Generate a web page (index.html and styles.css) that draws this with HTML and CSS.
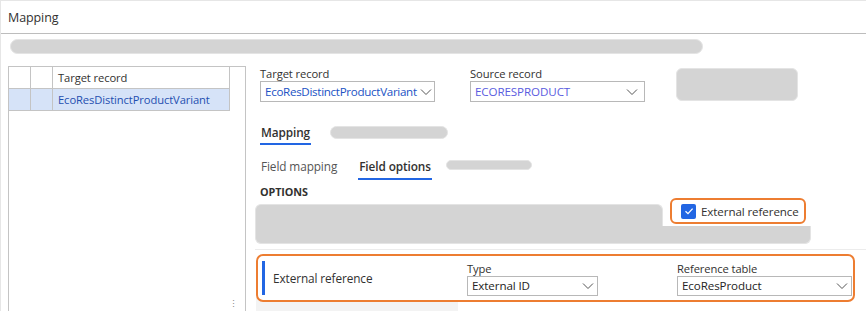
FILE: index.html
```html
<!DOCTYPE html>
<html>
<head>
<meta charset="utf-8">
<link rel="stylesheet" href="styles.css">
</head>
<body>
<div class="page">
  <div class="header">Mapping</div>
  <div class="sk sk-topbar"></div>
  <div class="main">
    <div class="left-panel">
      <div class="grid">
        <div class="grid-row head">
          <div class="c c1"></div><div class="c c2"></div><div class="c c3">Target record</div>
        </div>
        <div class="grid-row sel">
          <div class="c c1"></div><div class="c c2"></div><div class="c c3 link">EcoResDistinctProductVariant</div>
        </div>
      </div>
      <div class="grip">⋮</div>
    </div>
    <div class="right">
      <div class="fields">
        <div class="field f-target">
          <div class="lbl">Target record</div>
          <div class="combo">
            <span class="val blue tight">EcoResDistinctProductVariant</span>
            <svg class="chev" width="12" height="8" viewBox="0 0 12 8"><path d="M1 1.5 L6 6.5 L11 1.5" fill="none" stroke="#555" stroke-width="1"/></svg>
          </div>
        </div>
        <div class="field f-source">
          <div class="lbl">Source record</div>
          <div class="combo">
            <span class="val purple">ECORESPRODUCT</span>
            <svg class="chev" width="12" height="8" viewBox="0 0 12 8"><path d="M1 1.5 L6 6.5 L11 1.5" fill="none" stroke="#555" stroke-width="1"/></svg>
          </div>
        </div>
        <div class="sk sk-btn"></div>
      </div>

      <div class="tabs">
        <div class="tab active">Mapping</div>
        <div class="sk sk-tab"></div>
      </div>

      <div class="subtabs">
        <div class="subtab">Field mapping</div>
        <div class="subtab active">Field options</div>
        <div class="sk sk-subtab"></div>
      </div>

      <div class="section-title">OPTIONS</div>

      <div class="options">
        <div class="sk sk-opt1"></div>
        <div class="chk-box">
          <span class="chk"><svg width="14" height="14" viewBox="0 0 14 14"><path d="M3.5 7.2 L6 9.6 L10.6 4.6" fill="none" stroke="#fff" stroke-width="1.3"/></svg></span>
          <span class="chk-label">External reference</span>
        </div>
        <div class="sk sk-opt2"></div>
      </div>

      <div class="divider"></div>

      <div class="ext-box">
        <div class="ext-title">External reference</div>
        <div class="field f-type">
          <div class="lbl">Type</div>
          <div class="combo small">
            <span class="val">External ID</span>
            <svg class="chev" width="12" height="8" viewBox="0 0 12 8"><path d="M1 1.5 L6 6.5 L11 1.5" fill="none" stroke="#555" stroke-width="1"/></svg>
          </div>
        </div>
        <div class="field f-ref">
          <div class="lbl">Reference table</div>
          <div class="combo small">
            <span class="val">EcoResProduct</span>
            <svg class="chev" width="12" height="8" viewBox="0 0 12 8"><path d="M1 1.5 L6 6.5 L11 1.5" fill="none" stroke="#555" stroke-width="1"/></svg>
          </div>
        </div>
      </div>
      <div class="sk-under"></div>
    </div>
  </div>
</div>
</body>
</html>
```

FILE: styles.css
```css
* { box-sizing: border-box; }
html, body { margin: 0; padding: 0; background: #fff; }
body {
  font-family: "Segoe UI", "Open Sans", "Noto Sans", sans-serif;
  font-size: 11.2px;
  letter-spacing: -0.1px;
  color: #323130;
  width: 866px;
  height: 311px;
  overflow: hidden;
}
.page {
  height: 311px;
  border-top: 1px solid #e6e6e6;
  border-left: 1px solid #e6e6e6;
}
.header {
  height: 33px;
  padding-left: 7px;
  display: flex;
  align-items: center;
  font-size: 12.5px;
  border-bottom: 1px solid #bdbdbd;
}
.sk {
  background: #d4d4d4;
  border: 1px solid #e4e4e4;
}
.sk-topbar {
  margin: 5px 0 0 9px;
  width: 693px;
  height: 15px;
  border-radius: 8px;
}
.main {
  display: flex;
  margin-top: 12px;
  height: 260px;
}
.left-panel {
  margin-left: 7px;
  width: 238px;
  border-left: 1px solid #c4c4c4;
  border-top: 1px solid #c4c4c4;
  border-right: 1px solid #c4c4c4;
  position: relative;
}
.grid { width: 221px; }
.grid-row {
  display: flex;
  height: 22px;
  border-bottom: 1px solid #c4c4c4;
}
.c { height: 100%; border-right: 1px solid #c4c4c4; display: flex; align-items: center; }
.c1 { width: 22px; }
.c2 { width: 22px; }
.c3 { flex: 1; padding-left: 5px; }
.sel { background: #d6e3f8; }
.link { color: #1f4fb0; }
.grip {
  position: absolute;
  right: 7px;
  top: 232px;
  font-size: 9px;
  line-height: 10px;
  color: #888;
}
.right {
  flex: 1;
  padding-left: 9px;
  position: relative;
}
.fields {
  display: flex;
  padding-left: 5px;
}
.field { display: flex; flex-direction: column; }
.lbl { height: 15px; line-height: 15px; color: #323130; }
.combo {
  height: 21px;
  border: 1px solid #b8b8b8;
  display: flex;
  align-items: center;
  padding-left: 4px;
  padding-right: 3px;
  position: relative;
}
.combo .val { flex: 1; white-space: nowrap; overflow: hidden; font-size: 11.6px; }
.combo .val.tight { letter-spacing: -0.3px; }
.combo .chev { flex: none; }
.blue { color: #2152c4; }
.purple { color: #5a5ce0; }
.f-target .combo { width: 175px; padding-right: 2px; }
.f-source { margin-left: 35px; }
.f-source .combo { width: 175px; padding-right: 6px; }
.sk-btn {
  margin-left: 31px;
  margin-top: 2px;
  width: 122px;
  height: 33px;
  border-radius: 6px;
}
.tabs {
  display: flex;
  align-items: center;
  margin-top: 18px;
  padding-left: 5px;
}
.tab {
  font-weight: 600;
  font-size: 11.8px;
  height: 25px;
  line-height: 24px;
  padding: 0 1px;
  border-bottom: 2px solid #2266e3;
}
.sk-tab {
  margin-left: 19px;
  width: 118px;
  height: 13px;
  border-radius: 7px;
  margin-top: -1px;
}
.subtabs {
  display: flex;
  align-items: center;
  margin-top: 9px;
  padding-left: 5px;
}
.subtab {
  height: 26px;
  line-height: 25px;
  padding: 0 1px;
  font-size: 11.8px;
  color: #555;
}
.subtab.active {
  margin-left: 20px;
  font-weight: 600;
  color: #323130;
  border-bottom: 2px solid #2266e3;
}
.sk-subtab {
  margin-left: 14px;
  width: 86px;
  height: 10px;
  border-radius: 5px;
  margin-top: -5px;
}
.section-title {
  padding-left: 5px;
  margin-top: 4px;
  font-size: 10.8px;
  font-weight: 700;
  height: 16px;
  line-height: 16px;
}
.options {
  display: grid;
  grid-template-columns: 408px 7px 136px 5px;
  grid-template-rows: 28px 18px;
  margin-top: -2px;
}
.sk-opt1 {
  grid-column: 1;
  grid-row: 1;
  margin-top: 6px;
  border-radius: 6px 6px 0 0;
  border-bottom: none;
}
.sk-opt2 {
  grid-column: 1 / 5;
  grid-row: 2;
  border-radius: 0 0 6px 6px;
  border-top: none;
}
.chk-box {
  grid-column: 3;
  grid-row: 1;
  height: 26px;
  border: 2px solid #ed7d31;
  border-radius: 6px;
  display: flex;
  align-items: center;
  padding-left: 9px;
}
.chk {
  width: 15px;
  height: 15px;
  background: #2266e3;
  border-radius: 2px;
  display: flex;
  align-items: center;
  justify-content: center;
}
.chk-label { margin-left: 5px; font-size: 11.6px; }
.divider {
  margin-top: 5px;
  height: 1px;
  background: #ececec;
}
.ext-box {
  margin-top: 4px;
  margin-left: 1px;
  width: 599px;
  height: 48px;
  border: 2px solid #ed7d31;
  border-radius: 7px;
  display: flex;
  align-items: center;
  padding-left: 4px;
  position: relative;
  z-index: 1;
  background: #fff;
}
.ext-title {
  height: 34px;
  border-left: 3px solid #2266e3;
  padding-left: 8px;
  width: 205px;
  display: flex;
  align-items: center;
  font-size: 11.8px;
  font-weight: 500;
}
.f-type .combo { width: 131px; }
.f-ref { margin-left: 79px; }
.f-ref .combo { width: 175px; }
.combo.small { height: 20px; }
.combo.small .val { color: #252423; }
.sk-under {
  margin-left: 1px;
  margin-top: -4px;
  width: 202px;
  height: 14px;
  background: #f3f3f3;
}
```
